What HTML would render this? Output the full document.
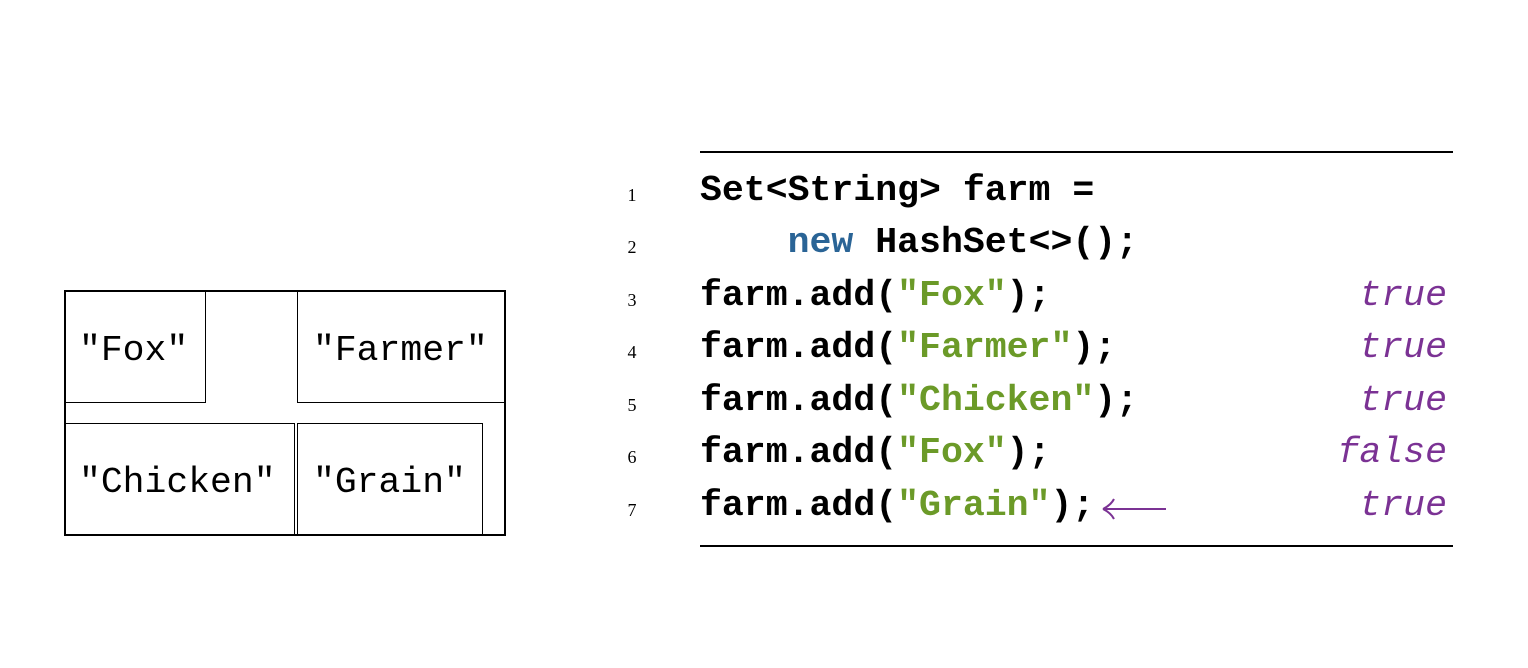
<!DOCTYPE html>
<html><head><style>
body{margin:0;width:1528px;height:668px;background:#fff;position:relative;overflow:hidden;font-family:"Liberation Mono",monospace;}
.b{position:absolute;border:1.3px solid #000;box-sizing:border-box}
.t{position:absolute;font-size:36.4px;color:#000;white-space:pre;line-height:1}
.rule{position:absolute;left:700px;width:753px;height:1.5px;background:#000}
.ln{position:absolute;left:622px;width:20px;text-align:center;font-family:"Liberation Serif",serif;font-size:18px;line-height:1}
.code{position:absolute;left:700px;font-size:36.5px;font-weight:bold;white-space:pre;line-height:1}
.v{position:absolute;right:81px;font-size:36.5px;font-style:italic;color:#7b3294;line-height:1}
.s{color:#6b9a28}.k{color:#2a6496}
</style></head><body>
<div class="b" style="left:64px;top:290px;width:442px;height:246px;border-width:2px"></div>
<div class="b" style="left:64px;top:290px;width:142px;height:113px"></div>
<div class="b" style="left:297px;top:290px;width:209px;height:113px"></div>
<div class="b" style="left:64px;top:423px;width:231px;height:113px"></div>
<div class="b" style="left:297px;top:423px;width:186px;height:113px"></div>
<div class="t" style="left:79px;top:333px">"Fox"</div>
<div class="t" style="left:313px;top:333px">"Farmer"</div>
<div class="t" style="left:79px;top:465px">"Chicken"</div>
<div class="t" style="left:313px;top:465px">"Grain"</div>

<div class="rule" style="top:151px"></div>
<div class="rule" style="top:545px"></div>

<div class="ln" style="top:186px">1</div>
<div class="ln" style="top:238px">2</div>
<div class="ln" style="top:291px">3</div>
<div class="ln" style="top:343px">4</div>
<div class="ln" style="top:396px">5</div>
<div class="ln" style="top:448px">6</div>
<div class="ln" style="top:501px">7</div>

<div class="code" style="top:173px">Set&lt;String&gt; farm =</div>
<div class="code" style="top:225px">    <span class="k">new</span> HashSet&lt;&gt;();</div>
<div class="code" style="top:278px">farm.add(<span class="s">"Fox"</span>);</div>
<div class="code" style="top:330px">farm.add(<span class="s">"Farmer"</span>);</div>
<div class="code" style="top:383px">farm.add(<span class="s">"Chicken"</span>);</div>
<div class="code" style="top:435px">farm.add(<span class="s">"Fox"</span>);</div>
<div class="code" style="top:488px">farm.add(<span class="s">"Grain"</span>);</div>
<svg style="position:absolute;left:1100px;top:497px" width="70" height="24"><path d="M3 12H66M3 12C9 9 12 6 14 2M3 12C9 15 12 18 14 22" stroke="#7b3294" stroke-width="2" fill="none"/></svg>

<div class="v" style="top:278px">true</div>
<div class="v" style="top:330px">true</div>
<div class="v" style="top:383px">true</div>
<div class="v" style="top:435px">false</div>
<div class="v" style="top:488px">true</div>
</body></html>
